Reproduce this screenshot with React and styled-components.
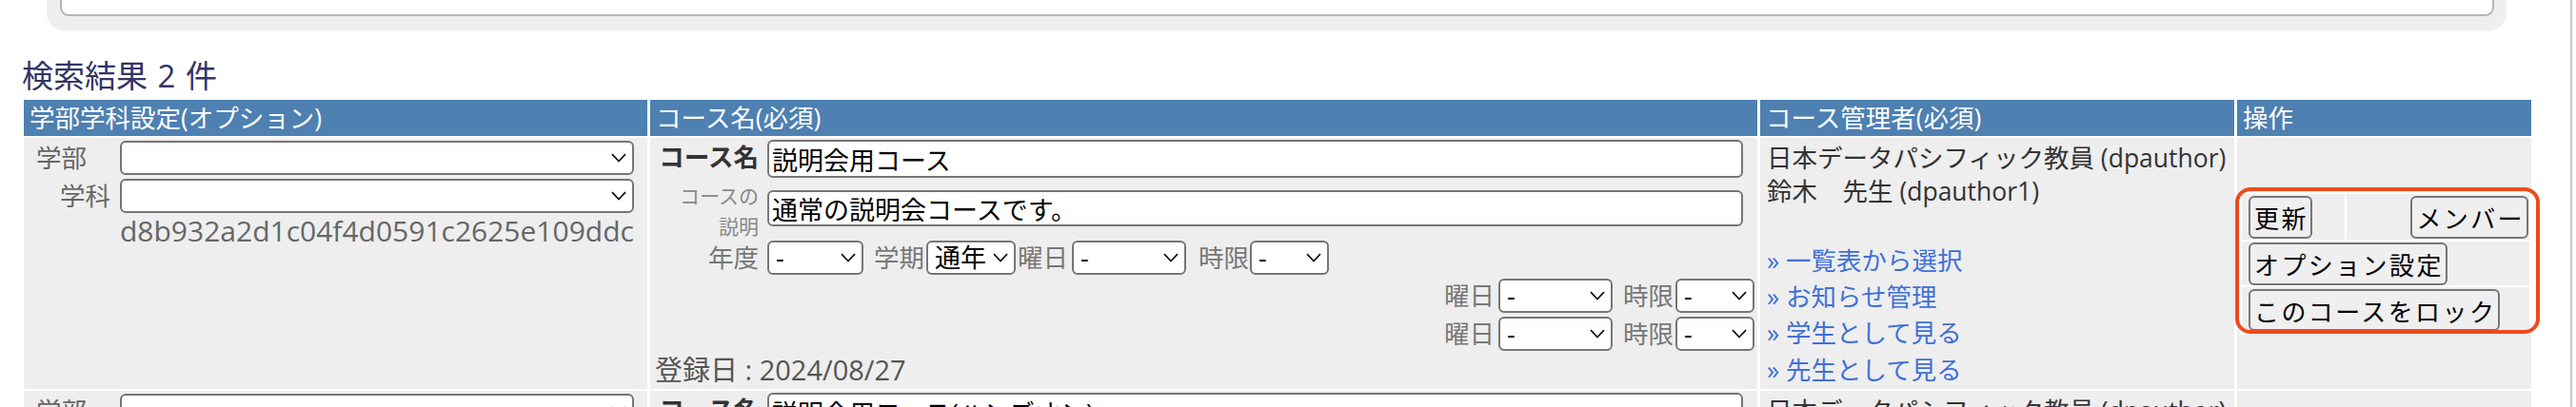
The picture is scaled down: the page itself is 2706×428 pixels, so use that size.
import React from "react";
import styled, { createGlobalStyle } from "styled-components";

const GlobalStyle = createGlobalStyle`
  html, body {
    margin: 0;
    padding: 0;
    background: #fff;
  }
  body {
    font-family: "Open Sans", "Noto Sans CJK JP", sans-serif;
    font-size: 26.5px;
    color: #333;
    overflow: hidden;
  }
`;

const courses = [
  {
    id: 1,
    hash: "d8b932a2d1c04f4d0591c2625e109ddc",
    name: "説明会用コース",
    description: "通常の説明会コースです。",
    term: "通年",
    created: "2024/08/27",
    admins: ["日本データパシフィック教員 (dpauthor)", "鈴木　先生 (dpauthor1)"],
    highlight: true,
  },
  {
    id: 2,
    hash: "a41c0e7f9b2d4c18b6e3f0d2a9c5e871",
    name: "説明会用コース(ハンズオン)",
    description: "ハンズオン用のコースです。",
    term: "通年",
    created: "2024/08/27",
    admins: ["日本データパシフィック教員 (dpauthor)"],
    highlight: false,
  },
];

const links = ["一覧表から選択", "お知らせ管理", "学生として見る", "先生として見る"];

const Chevron = () => (
  <svg width="16" height="10" viewBox="0 0 16 10">
    <path d="M1 1.2 L8 8.6 L15 1.2" fill="none" stroke="#111" strokeWidth="1.7" />
  </svg>
);

const Dropdown = ({ width, value }) => (
  <SelectBox $w={width}>
    <SelectField value={value || ""} onChange={() => {}}>
      <option value="">{value === "-" ? "-" : ""}</option>
      {value && value !== "-" ? <option value={value}>{value}</option> : null}
    </SelectField>
    <ChevronSlot>
      <Chevron />
    </ChevronSlot>
  </SelectBox>
);

const CourseRow = ({ course }) => (
  <tr>
    <Cell $pad="3px 0 0 0">
      <DeptGrid>
        <DeptLabel>学部</DeptLabel>
        <Dropdown width={540} />
        <DeptLabel $right>学科</DeptLabel>
        <Dropdown width={540} />
        <Hash>{course.hash}</Hash>
      </DeptGrid>
    </Cell>
    <Cell $pad="2px 3px 0 0">
      <FieldRow>
        <FieldLabel $kind="strong">コース名</FieldLabel>
        <TextField $h={40} value={course.name} readOnly />
      </FieldRow>
      <FieldRow $top={13}>
        <FieldLabel $kind="small">
          コースの
          <br />
          説明
        </FieldLabel>
        <TextField $h={38} value={course.description} readOnly />
      </FieldRow>
      <FieldRow $top={15}>
        <FieldLabel>年度</FieldLabel>
        <Dropdown width={101} value="-" />
        <InlineLabel $l={11} $r={2}>学期</InlineLabel>
        <Dropdown width={94} value={course.term} />
        <InlineLabel $l={2} $r={4}>曜日</InlineLabel>
        <Dropdown width={120} value="-" />
        <InlineLabel $l={13} $r={1}>時限</InlineLabel>
        <Dropdown width={83} value="-" />
      </FieldRow>
      {[0, 1].map((i) => (
        <FieldRow key={i} $top={4} $end>
          <InlineLabel $l={0} $r={4}>曜日</InlineLabel>
          <Dropdown width={120} value="-" />
          <InlineLabel $l={11} $r={2}>時限</InlineLabel>
          <Dropdown width={83} value="-" />
        </FieldRow>
      ))}
      <Created>登録日 : {course.created}</Created>
    </Cell>
    <Cell $pad="4px 0 0 7px">
      <Admins>
        {course.admins.map((a) => (
          <div key={a}>{a}</div>
        ))}
      </Admins>
      <LinkList $top={course.admins.length === 2 ? 36 : 71}>
        {links.map((l) => (
          <LinkItem key={l}>» {l}</LinkItem>
        ))}
      </LinkList>
    </Cell>
    <Cell $pad="0 0 0 3px" $valign="middle">
      <ActionWrap $marked={course.highlight}>
        <ActionTable>
          <tbody>
            <tr>
              <ActionCell $w={108} $h={48}>
                <ActionButton>更新</ActionButton>
              </ActionCell>
              <ActionCell $h={48} $right>
                <ActionButton>メンバー</ActionButton>
              </ActionCell>
            </tr>
            <tr>
              <ActionCell colSpan={2} $h={46}>
                <ActionButton>オプション設定</ActionButton>
              </ActionCell>
            </tr>
            <tr>
              <ActionCell colSpan={2} $h={48}>
                <ActionButton $h={44}>このコースをロック</ActionButton>
              </ActionCell>
            </tr>
          </tbody>
        </ActionTable>
      </ActionWrap>
    </Cell>
  </tr>
);

export default function App() {
  return (
    <Page>
      <GlobalStyle />
      <Main>
        <SearchPanel>
          <SearchInner />
        </SearchPanel>
        <Heading>検索結果 2 件</Heading>
        <ResultTable>
          <thead>
            <tr>
              <HeadCell $w={655}>学部学科設定(オプション)</HeadCell>
              <HeadCell $w={1163}>コース名(必須)</HeadCell>
              <HeadCell $w={498}>コース管理者(必須)</HeadCell>
              <HeadCell $w={309}>操作</HeadCell>
            </tr>
          </thead>
          <tbody>
            {courses.map((c) => (
              <CourseRow key={c.id} course={c} />
            ))}
          </tbody>
        </ResultTable>
      </Main>
      <WindowEdge />
    </Page>
  );
}

const Page = styled.div`
  display: flex;
  width: 2706px;
  height: 428px;
  overflow: hidden;
`;

const Main = styled.div`
  flex: 0 0 2700px;
`;

const WindowEdge = styled.div`
  flex: 0 0 2px;
  background: #c9c9c9;
`;

const SearchPanel = styled.div`
  display: flex;
  flex-direction: column;
  box-sizing: border-box;
  margin-left: 49px;
  width: 2584px;
  height: 32px;
  padding: 0 13px 15px 14px;
  background: #efefef;
  border-radius: 0 0 18px 18px;
`;

const SearchInner = styled.div`
  flex: 1;
  background: #fff;
  border: 2px solid #b5b5b5;
  border-top: none;
  border-radius: 0 0 9px 9px;
`;

const Heading = styled.h2`
  margin: 28px 0 3px 0;
  padding-left: 23px;
  height: 40px;
  line-height: 40px;
  font-size: 33px;
  font-weight: normal;
  color: #333366;
  word-spacing: 2px;
`;

const ResultTable = styled.table`
  margin-left: 22px;
  width: 2640px;
  table-layout: fixed;
  border-collapse: separate;
  border-spacing: 3px 2px;
`;

const HeadCell = styled.th`
  width: ${(p) => p.$w}px;
  box-sizing: border-box;
  height: 38px;
  padding: 0 6px;
  background: #4e80b1;
  color: #fff;
  font-weight: normal;
  text-align: left;
  line-height: 38px;
  white-space: nowrap;
`;

const Cell = styled.td`
  box-sizing: border-box;
  height: 264px;
  padding: ${(p) => p.$pad};
  background: #eee;
  vertical-align: ${(p) => p.$valign || "top"};
`;

const DeptGrid = styled.div`
  display: grid;
  grid-template-columns: 101px 540px;
  row-gap: 4px;
  align-items: center;
`;

const DeptLabel = styled.div`
  color: #666;
  line-height: 36px;
  text-align: ${(p) => (p.$right ? "right" : "left")};
  padding: ${(p) => (p.$right ? "0 10px 0 0" : "0 0 0 13px")};
`;

const Hash = styled.div`
  grid-column: 2;
  font-size: 30px;
  line-height: 30px;
  color: #666;
  white-space: nowrap;
`;

const SelectBox = styled.div`
  position: relative;
  flex: 0 0 auto;
  width: ${(p) => p.$w}px;
  height: 36px;
`;

const SelectField = styled.select`
  appearance: none;
  width: 100%;
  height: 100%;
  box-sizing: border-box;
  margin: 0;
  padding: 0 0 0 7px;
  border: 2px solid #767676;
  border-radius: 6px;
  background: #fff;
  color: #000;
  font-family: "Open Sans", "Noto Sans CJK JP", sans-serif;
  font-size: 27px;
  line-height: 32px;
`;

const ChevronSlot = styled.span`
  position: absolute;
  right: 8px;
  top: 13px;
  display: flex;
  pointer-events: none;
`;

const FieldRow = styled.div`
  display: flex;
  align-items: center;
  justify-content: ${(p) => (p.$end ? "flex-end" : "flex-start")};
  margin-top: ${(p) => p.$top || 0}px;
`;

const labelSize = { strong: "26.5px", small: "21px" };
const labelLine = { strong: "30px", small: "32px" };
const labelColor = { strong: "#333", small: "#888" };
const labelMargin = { strong: "0 0 5px 0", small: "-10px 0 -16px 0" };

const FieldLabel = styled.div`
  flex: 0 0 123px;
  box-sizing: border-box;
  padding-right: 9px;
  text-align: right;
  white-space: nowrap;
  font-weight: ${(p) => (p.$kind === "strong" ? 700 : 400)};
  font-size: ${(p) => labelSize[p.$kind] || "26.5px"};
  line-height: ${(p) => labelLine[p.$kind] || "36px"};
  color: ${(p) => labelColor[p.$kind] || "#777"};
  margin: ${(p) => labelMargin[p.$kind] || "0"};
`;

const InlineLabel = styled.span`
  margin: 0 ${(p) => p.$r}px 0 ${(p) => p.$l}px;
  color: #777;
  line-height: 36px;
  white-space: nowrap;
`;

const TextField = styled.input`
  box-sizing: border-box;
  width: 1025px;
  height: ${(p) => p.$h}px;
  margin: 0;
  padding: 0 3px;
  border: 2px solid #767676;
  border-radius: 6px;
  background: #fff;
  color: #000;
  font-family: "Open Sans", "Noto Sans CJK JP", sans-serif;
  font-size: 27px;
  outline: none;
`;

const Created = styled.div`
  margin-top: 5px;
  padding-left: 5px;
  font-size: 29px;
  line-height: 30px;
  color: #555;
`;

const Admins = styled.div`
  line-height: 35px;
  color: #333;
  white-space: nowrap;
`;

const LinkList = styled.div`
  margin-top: ${(p) => p.$top}px;
  line-height: 38.2px;
`;

const LinkItem = styled.a`
  display: block;
  color: #3f70d9;
  text-decoration: none;
  white-space: nowrap;
`;

const ActionWrap = styled.div`
  position: relative;
  &::after {
    content: "";
    display: ${(p) => (p.$marked ? "block" : "none")};
    position: absolute;
    top: -5px;
    left: -5px;
    right: -9px;
    bottom: 1px;
    border: 4px solid #ef4a1c;
    border-radius: 16px;
    pointer-events: none;
  }
`;

const ActionTable = styled.table`
  width: 306px;
  background: #fff;
  border-collapse: separate;
  border-spacing: 2px;
`;

const ActionCell = styled.td`
  ${(p) => (p.$w ? `width: ${p.$w}px;` : "")}
  height: ${(p) => p.$h}px;
  box-sizing: border-box;
  padding: ${(p) => (p.$right ? "0 1px 0 0" : "0 0 0 7px")};
  background: #eee;
  text-align: ${(p) => (p.$right ? "right" : "left")};
  vertical-align: middle;
`;

const ActionButton = styled.button`
  height: ${(p) => p.$h || 45}px;
  margin: 0;
  padding: 0 2px 0 4px;
  border: 2px solid #767676;
  border-radius: 6px;
  background: #efefef;
  color: #000;
  font-family: "Noto Sans CJK JP", sans-serif;
  font-size: 26px;
  letter-spacing: 2.4px;
  white-space: nowrap;
  vertical-align: middle;
`;
